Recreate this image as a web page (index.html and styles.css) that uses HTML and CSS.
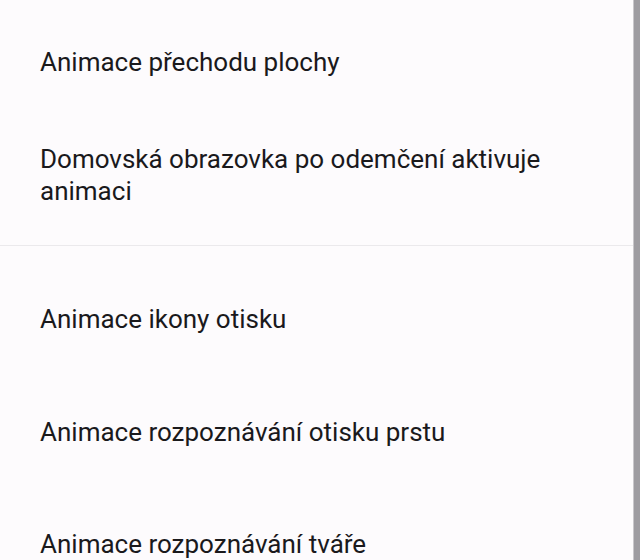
FILE: index.html
```html
<!DOCTYPE html>
<html lang="cs">
<head>
<meta charset="utf-8">
<link rel="stylesheet" href="styles.css">
</head>
<body>
<div class="screen">
  <main class="content">
    <section class="group group-top">
      <div class="item">Animace přechodu plochy</div>
      <div class="item">Domovská obrazovka po odemčení aktivuje animaci</div>
    </section>
    <hr class="divider">
    <section class="group group-bottom">
      <div class="item">Animace ikony otisku</div>
      <div class="item">Animace rozpoznávání otisku prstu</div>
      <div class="item">Animace rozpoznávání tváře</div>
    </section>
  </main>
  <div class="edge"></div>
</div>
</body>
</html>
```

FILE: styles.css
```css
html, body {
  margin: 0;
  padding: 0;
  background: #fdfbfd;
}
.screen {
  display: flex;
  width: 640px;
  height: 560px;
  overflow: hidden;
}
.content {
  flex: 1;
  min-width: 0;
  background: #fdfbfd;
}
.group {
  display: flex;
  flex-direction: column;
  padding: 0 40px;
}
.group-top {
  padding-top: 46px;
  gap: 65px;
}
.group-bottom {
  padding-top: 57px;
  gap: 80.5px;
}
.item {
  font-family: Roboto, "Noto Sans", sans-serif;
  font-size: 26px;
  line-height: 32px;
  color: #1a191c;
  max-width: 540px;
}
.divider {
  margin: 38px 0 0;
  border: 0;
  height: 1px;
  background: #ebe9ec;
}
.edge {
  width: 6px;
  flex: none;
  background: #9e9ca1;
  border-left: 1px solid #c9c7cb;
}
```
